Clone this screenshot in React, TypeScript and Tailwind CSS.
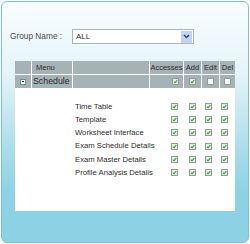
import React from "react";

const rows = [
  "Time Table",
  "Template",
  "Worksheet Interface",
  "Exam Schedule Details",
  "Exam Master Details",
  "Profile Analysis Details",
];

function Box({ checked = true }: { checked?: boolean }) {
  return (
    <svg width="7" height="7" viewBox="0 0 7 7" className="block shrink-0">
      <rect x="0.5" y="0.5" width="6" height="6" fill={checked ? "#e6eee2" : "#ffffff"} stroke="#8e9ca2" />
      {checked && <path d="M1.8 3.6 L3 4.8 L5.3 2.2" fill="none" stroke="#3c9a2c" strokeWidth="1.1" />}
    </svg>
  );
}

export default function App() {
  return (
    <div className="p-px" style={{ fontFamily: '"Liberation Sans", Arial, sans-serif' }}>
      <div className="flex h-[242px] w-[248px] flex-col rounded-[6px] border border-[#7dbfd3] bg-[linear-gradient(180deg,#f8fdfe_0%,#e4f4f9_30%,#a9dcea_62%,#8dd1e4_80%)]">
        <div className="flex items-center pl-[8px] pt-[27px]">
          <span className="w-[62px] text-[8.3px] text-[#4a4a4a]">Group Name :</span>
          <div className="flex h-[15px] w-[122px] items-center justify-between border border-[#a9b7bf] bg-white pl-[3px] pr-px">
            <span className="text-[8px] text-[#1d3550]">ALL</span>
            <div className="flex h-[12px] w-[11px] items-center justify-center bg-[#c4d3ee]">
              <svg width="7" height="5" viewBox="0 0 7 5">
                <path d="M1 1 L3.5 3.5 L6 1" fill="none" stroke="#2b4a86" strokeWidth="1.5" />
              </svg>
            </div>
          </div>
        </div>

        <div className="mx-[13px] mt-[17px] h-[150px] bg-white">
          <div className="flex h-[13px] gap-px text-[7.5px] text-[#2c2c2c]">
            <div className="w-[16px] bg-[#a5b3b7]" />
            <div className="flex w-[40px] items-center bg-[#a5b3b7] pl-[4px]">Menu</div>
            <div className="w-[76px] bg-[#a5b3b7]" />
            <div className="flex w-[33px] items-center justify-center bg-[#a5b3b7]">Accesses</div>
            <div className="flex w-[17px] items-center justify-center bg-[#a5b3b7]">Add</div>
            <div className="flex w-[17px] items-center justify-center bg-[#a5b3b7]">Edit</div>
            <div className="flex w-[15px] items-center justify-center bg-[#a5b3b7]">Del</div>
          </div>
          <div className="mt-px flex h-[13px] gap-px text-[8.8px] text-[#2c2c2c]">
            <div className="flex w-[16px] items-center justify-center bg-[#a5b3b7]">
              <div className="flex h-[6px] w-[6px] items-center justify-center border border-[#7a8a8e] bg-white">
                <div className="h-px w-[2px] bg-[#222]" />
              </div>
            </div>
            <div className="flex w-[40px] items-center bg-[#a5b3b7] pl-px">Schedule</div>
            <div className="w-[76px] bg-[#a5b3b7]" />
            <div className="flex w-[33px] items-center justify-end bg-[#a5b3b7] pr-[4px]"><Box /></div>
            <div className="flex w-[17px] items-center justify-center bg-[#a5b3b7]"><Box /></div>
            <div className="flex w-[17px] items-center justify-center bg-[#a5b3b7]"><Box checked={false} /></div>
            <div className="flex w-[15px] items-center justify-center bg-[#a5b3b7]"><Box checked={false} /></div>
          </div>

          <div className="pt-[12px]">
            {rows.map((r) => (
              <div key={r} className="flex h-[13.2px] items-center text-[7.7px] text-[#2e2e2e]">
                <span className="ml-[60px] w-[96px]">{r}</span>
                <div className="flex gap-[11px]">
                  <Box />
                  <Box />
                </div>
                <div className="ml-[9px] flex gap-[9px]">
                  <Box />
                  <Box />
                </div>
              </div>
            ))}
          </div>
        </div>
      </div>
    </div>
  );
}
